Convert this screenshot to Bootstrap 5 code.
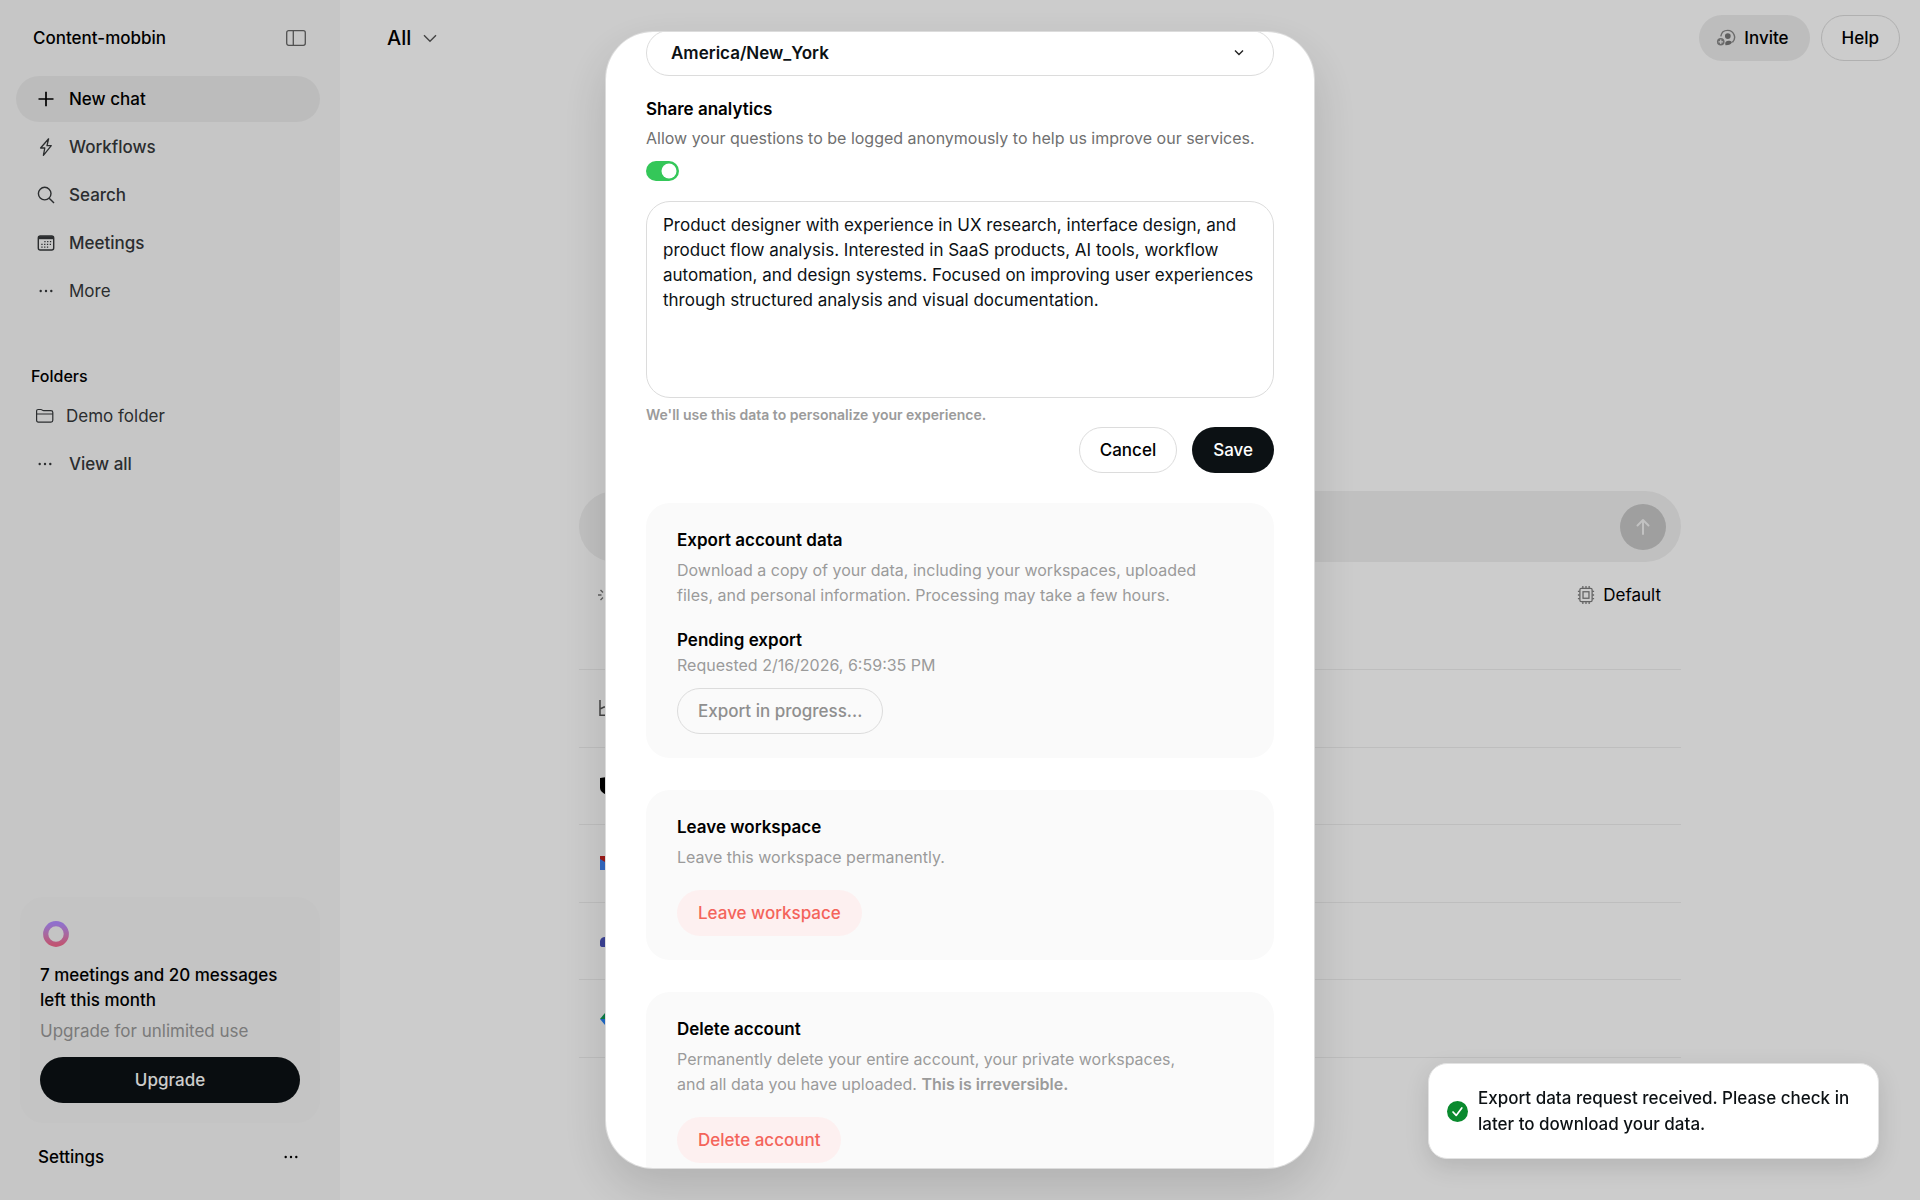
<!DOCTYPE html>
<html lang="en">
<head>
<meta charset="utf-8">
<meta name="viewport" content="width=device-width, initial-scale=1">
<title>Account settings</title>
<link rel="stylesheet" href="https://cdn.jsdelivr.net/npm/bootstrap@5.3.0/dist/css/bootstrap.min.css">
<style>
  :root { --ink: #0c1114; --soft: #9b9b9b; --line: #dcdcdc; }
  body { font: 550 17px/25px Inter, sans-serif; color: #000; background: #fff; }
  a, a:hover { color: inherit; text-decoration: none; }
  svg { display: block; flex: none; }
  h2, h3, p { font-size: 17px; line-height: 25px; margin: 0; }
  h2, h3 { font-weight: 600; }

  /* sidebar */
  .side { width: 340px; flex: none; background: #f8f8f8; padding: 16px 20px 20px 16px; }
  .side-head { height: 44px; padding: 0 14px 0 17px; margin-bottom: 16px; }
  .side-link { height: 46px; padding: 0 20px; gap: 13px; border-radius: 23px; color: #36393b; }
  .side-link svg { width: 20px; height: 20px; }
  .side-link.current { background: #ececec; color: #000; }
  .side-folder { padding-left: 19px; gap: 11px; }
  .side-nav { row-gap: 2px; }
  .side-label { font-size: 16px; padding: 0 15px; margin-top: 50px; }
  .side-thin { font-weight: 400; }
  .promo { background: #f5f5f5; border-radius: 24px; padding: 20px; margin-left: 4px; }
  .promo .offer { font-weight: 400; color: #999; margin: 6px 0 13px; }
  .pill { height: 46px; border-radius: 23px; padding: 0 20px; border: 1px solid transparent; font: 550 17px/25px Inter, sans-serif; }
  .pill-dark { background: var(--ink); color: #fff; }
  .pill-line { background: transparent; border-color: var(--line); color: #000; }
  .pill-grey { background: #ededed; color: #000; }
  .pill-red { background: #fdf0f0; color: #f4645b; }
  .pill-line:disabled { color: #8f8f8f; opacity: 1; }
  .side-foot { height: 46px; padding: 0 19px 0 22px; margin-top: 11px; }

  /* page behind the dialog */
  .top { padding: 15px 20px 15px 47px; }
  .tools { column-gap: 11px; }
  .scope { font-size: 20px; gap: 12px; background: none; border: 0; padding: 0; font-weight: 550; }
  .work { max-width: 1102px; margin-top: 415px; }
  .ask { height: 71px; border-radius: 36px; background: #f1f1f1; padding: 0 15px 0 24px; }
  .ask input { background: transparent; border: 0; outline: 0; }
  .send { width: 46px; height: 46px; border-radius: 50%; background: #c7c7c7; border: 0; padding: 0; }
  .under { height: 66px; padding: 0 20px 0 18px; margin-bottom: 41px; }
  .apps { display: grid; grid-auto-rows: 1fr; height: 389px; border-top: 1px solid #eee; }
  .apps li { border-bottom: 1px solid #eee; padding: 0 20px; }

  /* dialog */
  .veil { background: rgba(0, 0, 0, .2); padding: 31px 0; }
  .dialog { width: 710px; max-width: 100%; background: #fff; border: 1px solid #dcdcdc; border-radius: 48px; padding: 0 40px 40px;
    overflow-x: hidden; overflow-y: auto; scrollbar-width: none; box-shadow: 0 20px 50px rgba(0, 0, 0, .14); }
  .dialog::-webkit-scrollbar { display: none; }
  .zone { margin-top: -2px; margin-bottom: 21px; }
  .zone select { width: 100%; height: 46px; border: 1px solid var(--line); border-radius: 23px; padding: 0 24px; appearance: none; background: #fff; font-weight: 600; color: var(--ink); }
  .zone svg { position: absolute; right: 29px; top: 16px; pointer-events: none; }
  .note { font-size: 16px; font-weight: 400; }
  .toggle.form-check-input { width: 33px; height: 20px; margin: 0; border: 0; background-color: #34c759; float: none; }
  .toggle-row { height: 20px; min-height: 0; margin: 10px 0 20px; padding: 0; }
  .about { height: 197px; border: 1px solid var(--line); border-radius: 24px; padding: 11px 16px; font-weight: 400; color: var(--ink); resize: none; overflow: hidden; }
  .hint { font-size: 14px; line-height: 24px; font-weight: 600; color: var(--soft); margin-top: 5px; }
  .actions { column-gap: 15px; margin-bottom: 30px; }
  .panel { background: #fafafa; border-radius: 24px; padding: 25px 31px 24px; margin-bottom: 32px; }
  .panel .note { color: var(--soft); }
  .panel h3 { margin-bottom: 5px; }
  .panel .again { margin: 20px 0 0; }
  .panel .pill { margin-top: 20px; }
  .panel .pill-line { margin-top: 10px; }

  /* toast */
  .notice { right: 41px; bottom: 41px; width: 451px; background: #fff; border: 1px solid #e2e2e2; border-radius: 19px; padding: 21px 18px; gap: 10px; line-height: 26px; color: var(--ink); box-shadow: 0 8px 24px rgba(0, 0, 0, .12); z-index: 20; }
</style>
</head>
<body>
<div class="d-flex vh-100 overflow-hidden">

  <aside class="side d-flex flex-column">
    <div class="side-head d-flex align-items-center justify-content-between">
      <span>Content-mobbin</span>
      <button class="btn p-0 border-0" aria-label="Toggle sidebar">
        <svg width="20" height="16" fill="none" stroke="#666" stroke-width="1.3"><rect x=".7" y=".7" width="18.6" height="14.6" rx="2"/><path d="M7.3 1v14"/></svg>
      </button>
    </div>
    <nav class="side-nav d-flex flex-column">
      <a href="#" class="side-link current d-flex align-items-center"><svg viewBox="0 0 20 20" fill="none" stroke="currentColor" stroke-width="1.7"><path d="M10 2.7v14.6M2.5 10h15"/></svg>New chat</a>
      <a href="#" class="side-link d-flex align-items-center"><svg viewBox="0 0 20 20" fill="none" stroke="currentColor" stroke-width="1.3" stroke-linejoin="round"><path d="M12.6 1.8 4.600 11h4.200L7.400 18.300l7.900-9.600h-4.300z"/></svg>Workflows</a>
      <a href="#" class="side-link d-flex align-items-center"><svg viewBox="0 0 20 20" fill="none" stroke="currentColor" stroke-width="1.4"><circle cx="8.7" cy="8.6" r="6.3"/><path d="m13.2 13.2 4.8 4.900"/></svg>Search</a>
      <a href="#" class="side-link d-flex align-items-center"><svg viewBox="0 0 20 20" fill="none" stroke="currentColor" stroke-width="1.4"><rect x="2.3" y="3" width="15.4" height="14" rx="2"/><path d="M2.5 4.7h15" stroke-width="3"/><path d="M8.3 8.7h8M5.3 11.4h11M5.3 14.1h8" stroke-width="1.3" stroke-dasharray="1.3 1.5"/></svg>Meetings</a>
      <a href="#" class="side-link side-thin d-flex align-items-center"><svg viewBox="0 0 20 20" fill="currentColor"><circle cx="4.7" cy="10" r="1.2"/><circle cx="10" cy="10" r="1.2"/><circle cx="15.3" cy="10" r="1.2"/></svg>More</a>
    </nav>
    <div class="side-label">Folders</div>
    <nav class="side-nav d-flex flex-column mt-1">
      <a href="#" class="side-link side-folder side-thin d-flex align-items-center"><svg viewBox="0 0 20 20" fill="none" stroke="currentColor" stroke-width="1.2" stroke-linejoin="round"><path d="M1.600 5.200c0-1.100.6-1.700 1.600-1.700h2.700c1.300 0 1.500 1.200 2.800 1.200h7.200c1.300 0 1.900.6 1.900 1.800v7.800c0 1.200-.6 1.800-1.800 1.800H3.400c-1.200 0-1.800-.6-1.800-1.800zM1.600 8h16.200"/></svg>Demo folder</a>
      <a href="#" class="side-link d-flex align-items-center"><svg viewBox="0 0 20 20" fill="currentColor"><circle cx="3.700" cy="10" r="1.2"/><circle cx="9" cy="10" r="1.2"/><circle cx="14.300" cy="10" r="1.2"/></svg>View all</a>
    </nav>

    <div class="promo mt-auto">
      <svg class="mt-1 mb-3" width="30" height="26" viewBox="0 0 30 26" fill="none"><defs><linearGradient id="ring" x1="0" y1="0" x2="0" y2="1"><stop offset="0" stop-color="#b58dff"/><stop offset=".5" stop-color="#d283c8"/><stop offset="1" stop-color="#f06a90"/></linearGradient></defs><circle cx="16" cy="13" r="10.3" stroke="url(#ring)" stroke-width="5.2"/></svg>
      <p>7 meetings and 20 messages<br>left this month</p>
      <p class="offer">Upgrade for unlimited use</p>
      <button class="pill pill-dark w-100">Upgrade</button>
    </div>
    <div class="side-foot d-flex align-items-center justify-content-between">
      <a href="#">Settings</a>
      <button class="btn p-0 border-0" aria-label="More options"><svg width="20" height="20" viewBox="0 0 20 20"><circle cx="4.7" cy="10" r="1.2"/><circle cx="10" cy="10" r="1.2"/><circle cx="15.3" cy="10" r="1.2"/></svg></button>
    </div>
  </aside>

  <main class="flex-fill d-flex flex-column">
    <header class="top d-flex align-items-center justify-content-between">
      <button class="scope d-flex align-items-center">All <svg width="14" height="9" fill="none" stroke="#555" stroke-width="1.4"><path d="m1 1.300 6 6 6-6"/></svg></button>
      <div class="tools d-flex align-items-center">
        <button class="pill pill-grey d-flex align-items-center gap-2 ps-3">
          <svg width="20" height="18" viewBox="0 1 21 18" fill="none"><path d="M5 8.200C5.700 4.300 8.700 2 12.200 2a7.300 7.300 0 0 1 5 12.600" stroke="#888" stroke-width="1.500"/><circle cx="12.400" cy="8" r="3" fill="#777"/><path d="M10 17.700c-.4-1.700-.5-3.400.6-4.100 1.700-1.100 4.900-.8 6.200.9-.9 1.800-2.800 3.200-6.800 3.200z" fill="#777"/><circle cx="5" cy="14" r="4" fill="#888"/><path d="M5 11.600v4.800M2.600 14h4.800" stroke="#ededed" stroke-width="1.300"/></svg>
          Invite</button>
        <button class="pill pill-line">Help</button>
      </div>
    </header>
    <section class="work w-100 mx-auto">
      <form class="ask d-flex align-items-center">
        <input class="flex-fill" type="text" aria-label="Ask anything">
        <button type="button" class="send d-flex align-items-center justify-content-center" aria-label="Send"><svg width="16" height="18" fill="none" stroke="#f3f3f3" stroke-width="2" stroke-linecap="round" stroke-linejoin="round"><path d="M8 16V2M2.500 7.500 8 2l5.500 5.500"/></svg></button>
      </form>
      <div class="under d-flex align-items-center justify-content-between">
        <svg width="20" height="20" fill="none" stroke="#777" stroke-width="1.400"><path d="M1 10h3.500M3.500 5 6 7.500M3.500 15 6 12.500M10 1v3.500M10 15.500V19M15.500 10H19"/></svg>
        <span class="side-thin d-flex align-items-center gap-2">
          <svg width="18" height="18" viewBox="0 0 18 20" fill="none" stroke="#7d7d7d" stroke-width="1.400"><rect x="2.200" y="2.700" width="13.600" height="14.600" rx="1.500"/><rect x="5.700" y="6.400" width="6.600" height="7.200"/><path d="M5.500 0v2.500M9 0v2.500M12.500 0v2.500M5.500 17.500V20M9 17.500V20M12.500 17.500V20M0 6h2M0 10h2M0 14h2M16 6h2M16 10h2M16 14h2"/></svg>
          Default</span>
      </div>
      <ul class="apps list-unstyled mb-0">
        <li class="d-flex align-items-center"><svg width="18" height="16" fill="none" stroke="#555" stroke-width="1.500"><path d="M1 0v15.200h10V7H5L1 9"/></svg></li>
        <li class="d-flex align-items-center"><svg width="18" height="18"><path d="M1 1 8 0v18Q1 15 1 11z"/></svg></li>
        <li class="d-flex align-items-center"><svg width="18" height="14"><path fill="#4285f4" d="M1 2h5v12H1z"/><path fill="#c5221f" d="M1 0h5v6L1 3z"/></svg></li>
        <li class="d-flex align-items-center"><svg width="18" height="16"><path fill="#4b53bc" d="M1 8q1-4 5-4v10H4q-3 0-3-2z"/></svg></li>
        <li class="d-flex align-items-center"><svg width="18" height="12"><path fill="#0f9d58" d="M6 0 1 6h5z"/><path fill="#2684fc" d="M1 6h5v6z"/></svg></li>
      </ul>
    </section>
  </main>
</div>

<div class="veil position-fixed top-0 start-0 w-100 h-100 d-flex justify-content-center">
  <div class="dialog" role="dialog" aria-modal="true" aria-label="Account settings">
    <div class="zone position-relative">
      <select aria-label="Time zone"><option>America/New_York</option></select>
      <svg width="12" height="12" fill="none" stroke="#222" stroke-width="1.400"><path d="m2 4.500 4 4 4-4"/></svg>
    </div>
    <h2><label for="share">Share analytics</label></h2>
    <p class="note mt-1" style="color:#707070">Allow your questions to be logged anonymously to help us improve our services.</p>
    <div class="toggle-row form-check form-switch d-flex"><input class="toggle form-check-input" type="checkbox" role="switch" id="share" checked></div>
    <textarea class="about d-block w-100" aria-label="About you" aria-describedby="hint">Product designer with experience in UX research, interface design, and product flow analysis. Interested in SaaS products, AI tools, workflow automation, and design systems. Focused on improving user experiences through structured analysis and visual documentation.</textarea>
    <p class="hint" id="hint">We'll use this data to personalize your experience.</p>
    <div class="actions d-flex justify-content-end">
      <button class="pill pill-line">Cancel</button>
      <button class="pill pill-dark">Save</button>
    </div>

    <section class="panel">
      <h3>Export account data</h3>
      <p class="note">Download a copy of your data, including your workspaces, uploaded<br>files, and personal information. Processing may take a few hours.</p>
      <h3 class="again">Pending export</h3>
      <p class="note">Requested 2/16/2026, 6:59:35 PM</p>
      <button class="pill pill-line" disabled>Export in progress...</button>
    </section>
    <section class="panel">
      <h3>Leave workspace</h3>
      <p class="note">Leave this workspace permanently.</p>
      <button class="pill pill-red">Leave workspace</button>
    </section>
    <section class="panel">
      <h3>Delete account</h3>
      <p class="note">Permanently delete your entire account, your private workspaces,<br>and all data you have uploaded. <span class="fw-semibold">This is irreversible.</span></p>
      <button class="pill pill-red">Delete account</button>
    </section>
  </div>
</div>

<div class="notice position-fixed d-flex align-items-center" role="status">
  <svg width="21" height="21" fill="none"><circle cx="10.500" cy="10.500" r="10.500" fill="#0a8a2e"/><path d="m6 11 3.200 3.400L14.800 7" stroke="#fff" stroke-width="1.700" stroke-linecap="round" stroke-linejoin="round"/></svg>
  <span>Export data request received. Please check in later to download your data.</span>
</div>
<script src="https://cdn.jsdelivr.net/npm/bootstrap@5.3.0/dist/js/bootstrap.bundle.min.js"></script>
</body>
</html>
